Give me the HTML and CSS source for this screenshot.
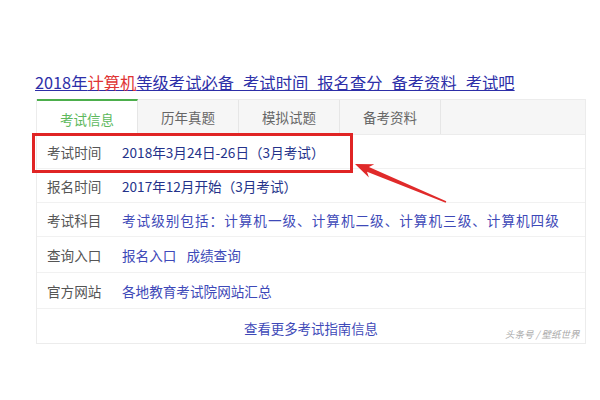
FILE: index.html
```html
<!DOCTYPE html>
<html lang="zh-CN">
<head>
    <meta charset="UTF-8">
    <title>计算机等级考试</title>
    <link rel="stylesheet" href="styles.css">
</head>
<body>

<div class="page">
    <a class="title" href="#">2018年<em>计算机</em>等级考试必备_考试时间_报名查分_备考资料_考试吧</a>

    <div class="card">
        <div class="tabs">
            <div class="tab active">考试信息</div>
            <div class="tab">历年真题</div>
            <div class="tab">模拟试题</div>
            <div class="tab">备考资料</div>
        </div>

        <div class="row short">
            <span class="label">考试时间</span>
            <span class="value">2018年3月24日-26日（3月考试）</span>
        </div>
        <div class="row short">
            <span class="label">报名时间</span>
            <span class="value">2017年12月开始（3月考试）</span>
        </div>
        <div class="row short">
            <span class="label">考试科目</span>
            <span class="link wide">考试级别包括：计算机一级、计算机二级、计算机三级、计算机四级</span>
        </div>
        <div class="row">
            <span class="label">查询入口</span>
            <span class="link">报名入口</span>
            <span class="link gap">成绩查询</span>
        </div>
        <div class="row">
            <span class="label">官方网站</span>
            <span class="link">各地教育考试院网站汇总</span>
        </div>
        <div class="more">查看更多考试指南信息</div>

        <div class="highlight"></div>
        <svg class="arrow" width="100" height="50" viewBox="0 0 100 50">
            <polygon points="2,2 21.3,2.2 15.9,5.1 93.3,39.3 92.7,40.7 14,9.7 15.9,15.4" fill="#e02a2a"/>
        </svg>
    </div>

    <div class="mark">头条号 / 壁纸世界</div>
</div>

</body>
</html>
```

FILE: styles.css
```css
* {
    box-sizing: border-box;
    margin: 0;
    padding: 0;
}

body {
    font-family: "Noto Sans CJK SC", "Liberation Sans", sans-serif;
    background: #fff;
    color: #333;
    width: 600px;
    height: 400px;
    overflow: hidden;
}

.page {
    position: relative;
    padding: 70px 14px 0 36px;
}

.title {
    display: block;
    font-size: 16.3px;
    line-height: 24px;
    color: #2d2fa8;
    text-decoration: underline;
    margin-left: -1px;
    margin-bottom: 5px;
    white-space: nowrap;
}

.title em {
    font-style: normal;
    color: #e03434;
}

.card {
    position: relative;
    border: 1px solid #ececec;
    border-top: none;
    height: 245px;
}

.tabs {
    display: flex;
    height: 36px;
    background: #f6f6f6;
    border-top: 1px solid #ececec;
    border-bottom: 1px solid #ececec;
}

.tab {
    width: 101px;
    display: flex;
    align-items: center;
    justify-content: center;
    font-size: 13.5px;
    color: #666;
    border-right: 1px solid #e6e6e6;
}

.tab.active {
    background: #fff;
    color: #5cb85c;
    border-top: 2px solid #4cae4c;
    margin-top: -1px;
    height: 37px;
    border-bottom: none;
}

.row {
    display: flex;
    align-items: center;
    height: 36px;
    padding-left: 10px;
    font-size: 13.6px;
    border-bottom: 1px solid #f1f1f1;
    white-space: nowrap;
}

.row.short {
    height: 34px;
}

.label {
    width: 75px;
    color: #555;
}

.value {
    color: #24328a;
}

.link {
    color: #3e49b8;
}

.link.wide {
    letter-spacing: 1px;
}

.link.gap {
    margin-left: 10px;
}

.more {
    text-align: center;
    font-size: 13.4px;
    color: #3e49b8;
    padding-top: 9px;
}

.highlight {
    position: absolute;
    left: -5px;
    top: 34px;
    width: 321px;
    height: 40px;
    border: 3px solid #e02424;
}

.arrow {
    position: absolute;
    left: 316px;
    top: 63px;
}

.mark {
    position: absolute;
    left: 505px;
    top: 327px;
    font-size: 9.5px;
    color: #aaa;
    font-style: italic;
}
```
